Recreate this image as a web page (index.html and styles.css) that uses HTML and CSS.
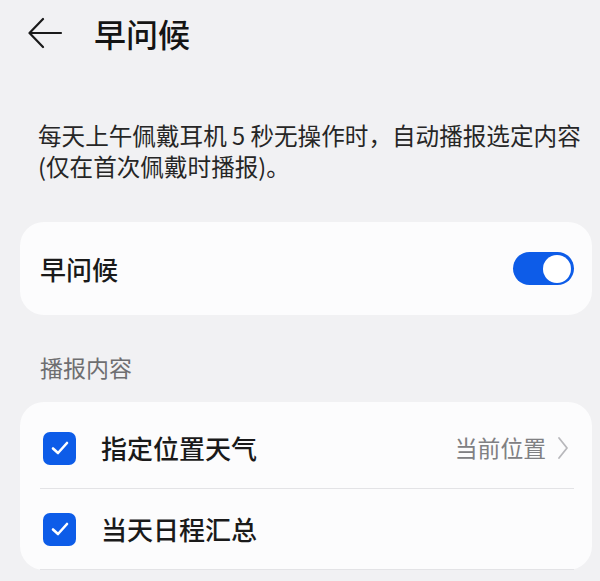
FILE: index.html
```html
<!DOCTYPE html>
<html lang="zh-CN">
<head>
<meta charset="utf-8">
<title>早问候</title>
<link rel="stylesheet" href="styles.css">
</head>
<body>
<div class="page">
  <header class="topbar">
    <svg class="back" width="36" height="32" viewBox="0 0 36 32" aria-hidden="true">
      <path d="M33 16 H2 M15 2 L1.5 16 L15 30" fill="none" stroke="#1a1a1a" stroke-width="2.2" stroke-linecap="round" stroke-linejoin="round"/>
    </svg>
    <h1 class="title">早问候</h1>
  </header>

  <p class="desc">每天上午佩戴耳机 5 秒无操作时，自动播报选定内容(仅在首次佩戴时播报)。</p>

  <section class="card switch-card">
    <span class="label">早问候</span>
    <span class="toggle"><span class="knob"></span></span>
  </section>

  <div class="section-title">播报内容</div>

  <section class="card list-card">
    <div class="row">
      <div class="row-inner">
        <span class="check"><svg width="20" height="16" viewBox="0 0 20 16"><path d="M3 8.5 L8 13 L17 3" fill="none" stroke="#fff" stroke-width="2.6" stroke-linecap="round" stroke-linejoin="round"/></svg></span>
        <span class="item">指定位置天气</span>
        <span class="value">当前位置</span>
        <svg class="chev" width="12" height="24" viewBox="0 0 12 24"><path d="M2 2 L10 12 L2 22" fill="none" stroke="#b8b8bc" stroke-width="1.8" stroke-linecap="round" stroke-linejoin="round"/></svg>
      </div>
    </div>
    <div class="row">
      <div class="row-inner">
        <span class="check"><svg width="20" height="16" viewBox="0 0 20 16"><path d="M3 8.5 L8 13 L17 3" fill="none" stroke="#fff" stroke-width="2.6" stroke-linecap="round" stroke-linejoin="round"/></svg></span>
        <span class="item">当天日程汇总</span>
      </div>
    </div>
  </section>
</div>
</body>
</html>
```

FILE: styles.css
```css
html, body {
  margin: 0;
  padding: 0;
}
body {
  background: #f1f1f3;
  font-family: "Noto Sans CJK SC", "Noto Sans", sans-serif;
  color: #1a1a1a;
  width: 600px;
  height: 581px;
  overflow: hidden;
}
.page {
  display: flex;
  flex-direction: column;
}
.topbar {
  height: 66px;
  display: flex;
  align-items: center;
  padding-left: 28px;
}
.back {
  display: block;
  margin-right: 30px;
}
.title {
  margin: 0;
  font-size: 32px;
  font-weight: 500;
  line-height: 40px;
  color: #141414;
}
.desc {
  margin: 54px 0 0 0;
  padding: 0 10px 0 38px;
  font-size: 23.6px;
  line-height: 31px;
  color: #262626;
}
.card {
  background: #fcfcfd;
  border-radius: 24px;
  margin: 0 8px 0 20px;
}
.switch-card {
  margin-top: 40px;
  height: 93px;
  display: flex;
  align-items: center;
  justify-content: space-between;
  padding: 0 18px 0 20px;
}
.label {
  font-size: 26px;
  line-height: 34px;
  font-weight: 500;
}
.toggle {
  width: 61px;
  height: 33px;
  border-radius: 17px;
  background: #0d5ce8;
  display: flex;
  align-items: center;
  justify-content: flex-end;
  padding-right: 3px;
  box-sizing: border-box;
}
.knob {
  width: 28px;
  height: 28px;
  border-radius: 50%;
  background: #fff;
}
.section-title {
  margin-top: 37px;
  padding-left: 40px;
  font-size: 23px;
  line-height: 30px;
  color: #6e6e70;
}
.list-card {
  margin-top: 20px;
  padding-top: 6px;
}
.row-inner {
  height: 80px;
  margin: 0 18px 0 20px;
  border-bottom: 1px solid #e3e3e6;
  display: flex;
  align-items: center;
}
.check {
  width: 33px;
  height: 33px;
  margin-left: 3px;
  border-radius: 7px;
  background: #0d5ce8;
  display: flex;
  align-items: center;
  justify-content: center;
}
.check svg {
  display: block;
}
.item {
  margin-left: 25px;
  font-size: 26px;
  line-height: 34px;
  font-weight: 500;
  flex: 1;
}
.value {
  font-size: 22.8px;
  line-height: 30px;
  color: #808083;
}
.chev {
  display: block;
  margin-left: 11px;
  margin-right: 5px;
}
```
